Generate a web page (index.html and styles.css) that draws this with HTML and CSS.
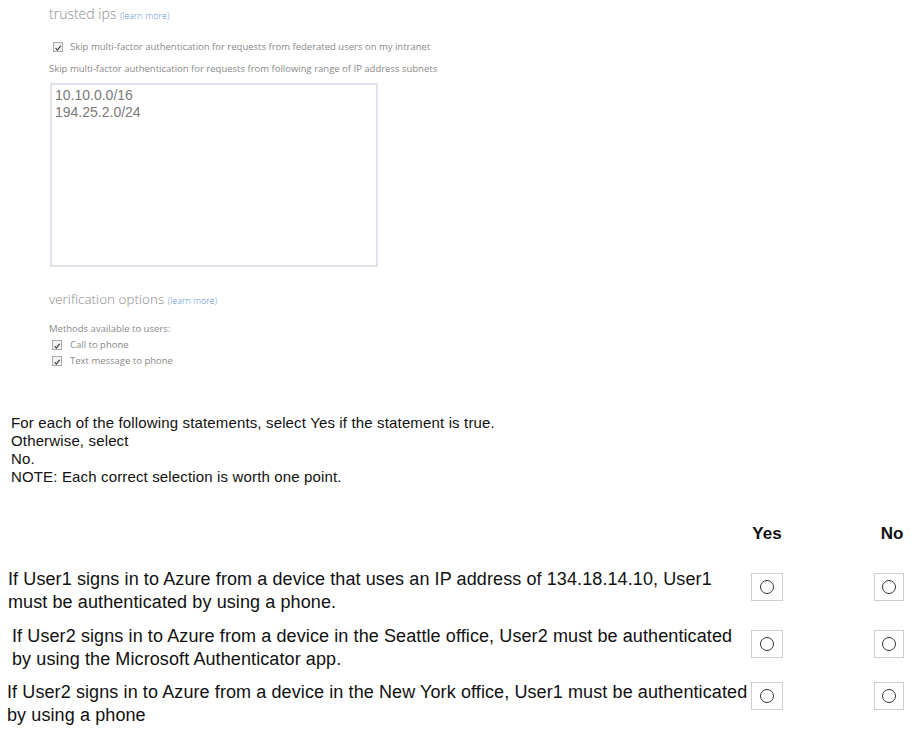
FILE: index.html
```html
<!DOCTYPE html>
<html lang="en">
<head>
    <meta charset="UTF-8">
    <title>Trusted IPs - MFA question</title>
    <link rel="stylesheet" href="styles.css">
</head>
<body>

    <div class="mfa">
        <h3 class="mfa-title">trusted ips <a class="learn">(learn more)</a></h3>

        <div class="check-row first">
            <span class="box"><svg viewBox="0 0 10 10" width="10" height="10"><path d="M2 5.2 L4.2 7.6 L8.4 2.4" fill="none" stroke="#444" stroke-width="1.6"/></svg></span>
            Skip multi-factor authentication for requests from federated users on my intranet
        </div>
        <p class="small">Skip multi-factor authentication for requests from following range of IP address subnets</p>

        <div class="ip-list">10.10.0.0/16<br>194.25.2.0/24</div>

        <h3 class="mfa-title second">verification options <a class="learn">(learn more)</a></h3>

        <p class="small methods">Methods available to users:</p>
        <div class="check-row tight">
            <span class="box"><svg viewBox="0 0 10 10" width="10" height="10"><path d="M2 5.2 L4.2 7.6 L8.4 2.4" fill="none" stroke="#444" stroke-width="1.6"/></svg></span>
            Call to phone
        </div>
        <div class="check-row tight">
            <span class="box"><svg viewBox="0 0 10 10" width="10" height="10"><path d="M2 5.2 L4.2 7.6 L8.4 2.4" fill="none" stroke="#444" stroke-width="1.6"/></svg></span>
            Text message to phone
        </div>
    </div>

    <div class="question">
        For each of the following statements, select Yes if the statement is true.<br>
        Otherwise, select<br>
        No.<br>
        NOTE: Each correct selection is worth one point.
    </div>

    <div class="answers">
        <div class="head">
            <span class="stmt"></span>
            <span class="col">Yes</span>
            <span class="col no">No</span>
        </div>

        <div class="row r1">
            <div class="stmt">If User1 signs in to Azure from a device that uses an IP address of 134.18.14.10, User1<br>must be authenticated by using a phone.</div>
            <span class="radio"><i></i></span>
            <span class="radio no"><i></i></span>
        </div>

        <div class="row r2">
            <div class="stmt">If User2 signs in to Azure from a device in the Seattle office, User2 must be authenticated<br>by using the Microsoft Authenticator app.</div>
            <span class="radio"><i></i></span>
            <span class="radio no"><i></i></span>
        </div>

        <div class="row r3">
            <div class="stmt">If User2 signs in to Azure from a device in the New York office, User1 must be authenticated<br>by using a phone</div>
            <span class="radio"><i></i></span>
            <span class="radio no"><i></i></span>
        </div>
    </div>

</body>
</html>
```

FILE: styles.css
```css
body {
    margin: 0;
    background-color: #fff;
    font-family: "Liberation Sans", Arial, sans-serif;
    color: #111;
}

/* top part: blurry portal screenshot */
.mfa {
    padding: 4px 0 0 49px;
    font-family: "Open Sans", "Noto Sans", sans-serif;
    color: #8a8a8a;
}
.mfa-title {
    margin: 0;
    font-size: 14px;
    font-weight: 300;
    line-height: 20px;
    color: #8c8c8c;
}
.mfa-title.second {
    margin-top: 22px;
    font-size: 13.5px;
}
.learn {
    font-size: 9px;
    color: #5b8fc9;
}
.check-row {
    display: flex;
    align-items: center;
    gap: 7px;
    margin-left: 4px;
    font-size: 9.5px;
    line-height: 16px;
}
.check-row.first {
    margin-top: 13px;
}
.check-row.tight {
    margin-left: 3px;
    gap: 8px;
}
.methods + .check-row {
    margin-top: 2px;
}
.box {
    display: inline-flex;
    width: 10px;
    height: 10px;
    border: 1px solid #aaa;
    box-sizing: border-box;
    background: #f4f4f4;
}
.small {
    margin: 8px 0 0;
    font-size: 9.5px;
    line-height: 12px;
}
.small.methods {
    margin-top: 12px;
}
.ip-list {
    width: 328px;
    height: 184px;
    margin: 8px 0 0 1px;
    box-sizing: border-box;
    border: 2px solid #dfe4ea;
    padding: 2px 3px;
    font-family: "Liberation Sans", Arial, sans-serif;
    font-size: 14px;
    line-height: 17px;
    color: #7a7a7a;
}

.question {
    margin: 45px 0 0 11px;
    font-size: 15px;
    line-height: 18px;
    letter-spacing: 0.15px;
}

.answers {
    margin-top: 38px;
}
.head, .row {
    display: flex;
}
.head {
    font-weight: bold;
    font-size: 17px;
    line-height: 20px;
}
.stmt {
    width: 743px;
    flex-shrink: 0;
    box-sizing: border-box;
    font-size: 18px;
    line-height: 23px;
    letter-spacing: 0.1px;
    white-space: nowrap;
}
.col {
    width: 32px;
    margin-left: 8px;
    text-align: center;
}
.col.no {
    margin-left: 93px;
}
.row {
    align-items: flex-start;
    margin-top: 11px;
}
.row.r1 { margin-top: 24px; padding-left: 8px; }
.row.r2 { padding-left: 12px; }
.row.r3 { margin-top: 10px; padding-left: 7px; }
.row.r1 .stmt { width: 743px; }
.row.r2 .stmt { width: 739px; }
.row.r3 .stmt { width: 744px; }

.radio {
    display: flex;
    align-items: center;
    justify-content: center;
    width: 32px;
    height: 28px;
    margin-top: 5px;
    box-sizing: border-box;
    border: 1px solid #cfcfcf;
}
.radio.no {
    margin-left: 91px;
    width: 30px;
}
.row.r3 .radio {
    margin-top: 1px;
}
.radio i {
    width: 14px;
    height: 14px;
    box-sizing: border-box;
    border: 1.8px solid #333;
    border-radius: 50%;
}
```
